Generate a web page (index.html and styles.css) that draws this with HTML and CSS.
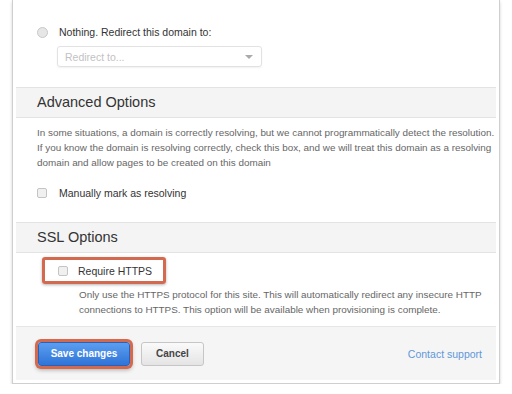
FILE: index.html
```html
<!DOCTYPE html>
<html lang="en">
<head>
    <meta charset="UTF-8">
    <title>Domain settings</title>
    <link rel="stylesheet" href="styles.css">
</head>
<body>
    <div class="card">
        <div class="redirect">
            <label class="option">
                <span class="radio"></span>
                <span>Nothing. Redirect this domain to:</span>
            </label>
            <div class="select">
                <span>Redirect to...</span>
                <span class="caret"></span>
            </div>
        </div>

        <div class="section-head">Advanced Options</div>
        <div class="section-body">
            <p class="help">In some situations, a domain is correctly resolving, but we cannot programmatically detect the resolution. If you know the domain is resolving correctly, check this box, and we will treat this domain as a resolving domain and allow pages to be created on this domain</p>
            <label class="option">
                <span class="check"></span>
                <span>Manually mark as resolving</span>
            </label>
        </div>

        <div class="section-head">SSL Options</div>
        <div class="ssl-body">
            <label class="option highlight">
                <span class="check"></span>
                <span>Require HTTPS</span>
            </label>
            <p class="help ssl-help">Only use the HTTPS protocol for this site. This will automatically redirect any insecure HTTP connections to HTTPS. This option will be available when provisioning is complete.</p>
        </div>

        <div class="footer">
            <button class="btn btn-primary">Save changes</button>
            <button class="btn">Cancel</button>
            <a class="support" href="#">Contact support</a>
        </div>
    </div>
</body>
</html>
```

FILE: styles.css
```css
body {
    margin: 0;
    background: #fff;
    font-family: "Liberation Sans", Arial, sans-serif;
    color: #333;
}
.card {
    margin-left: 12px;
    width: 480px;
    padding: 0 3px 3px;
    border: 1px solid #cfcfcf;
    border-top: none;
    box-shadow: 0 2px 3px rgba(0, 0, 0, 0.18);
}
.redirect {
    padding: 26px 0 20px 21px;
    border-bottom: 1px solid #e3e3e3;
}
.option {
    display: flex;
    align-items: center;
    font-size: 10.5px;
    color: #333;
}
.radio {
    width: 9px;
    height: 9px;
    border: 1px solid #c8c8c8;
    border-radius: 50%;
    background: #e6e6e6;
    margin-right: 11px;
}
.check {
    width: 8px;
    height: 8px;
    border: 1px solid #c4c4c4;
    border-radius: 2px;
    background: #f0f0f0;
    margin-right: 12px;
}
.select {
    display: flex;
    align-items: center;
    justify-content: space-between;
    box-sizing: border-box;
    width: 205px;
    height: 21px;
    margin: 8px 0 0 20px;
    padding: 0 8px 0 7px;
    border: 1px solid #e2e2e2;
    border-radius: 3px;
    box-shadow: 0 1px 2px rgba(0, 0, 0, 0.06);
    font-size: 10.5px;
    color: #c2c2c2;
}
.caret {
    width: 0;
    height: 0;
    border-left: 4px solid transparent;
    border-right: 4px solid transparent;
    border-top: 4px solid #aaa;
}
.section-head {
    height: 29px;
    line-height: 29px;
    padding-left: 21px;
    background: #f4f4f4;
    border-bottom: 1px solid #e3e3e3;
    font-size: 14.5px;
    color: #333;
}
.section-body {
    padding: 7px 0 23px 21px;
    border-bottom: 1px solid #e3e3e3;
}
.help {
    margin: 0;
    font-size: 9.9px;
    line-height: 15px;
    color: #666;
}
.section-body .option {
    margin-top: 17px;
}
.ssl-body {
    padding: 4px 0 9px 26px;
}
.highlight {
    box-sizing: border-box;
    width: 124px;
    height: 27px;
    padding-left: 13px;
    border: 3px solid #d36a4f;
    border-radius: 3px;
    box-shadow: 0 1px 3px rgba(0, 0, 0, 0.3);
}
.highlight .check {
    margin-right: 10px;
}
.ssl-help {
    margin: 3px 0 0 37px;
}
.footer {
    display: flex;
    align-items: center;
    height: 53px;
    padding: 0 14px 0 22px;
    background: #f5f5f5;
    border-top: 1px solid #e6e6e6;
}
.btn {
    height: 24px;
    padding: 0 14px;
    border: 1px solid #c6c6c6;
    border-radius: 3px;
    background: linear-gradient(#fafafa, #e4e4e4);
    font-family: "Liberation Sans", Arial, sans-serif;
    font-size: 10px;
    font-weight: bold;
    color: #444;
    white-space: nowrap;
}
.btn-primary {
    width: 92px;
    padding: 0;
    margin-right: 11px;
    border-color: #2b62b8;
    background: linear-gradient(#5b9ef0, #2f74d8);
    color: #fff;
    box-shadow: 0 0 0 3px #d36a4f, 0 2px 4px 2px rgba(0, 0, 0, 0.3);
}
.support {
    margin-left: auto;
    font-size: 10.5px;
    color: #5f98d9;
    text-decoration: none;
}
```
